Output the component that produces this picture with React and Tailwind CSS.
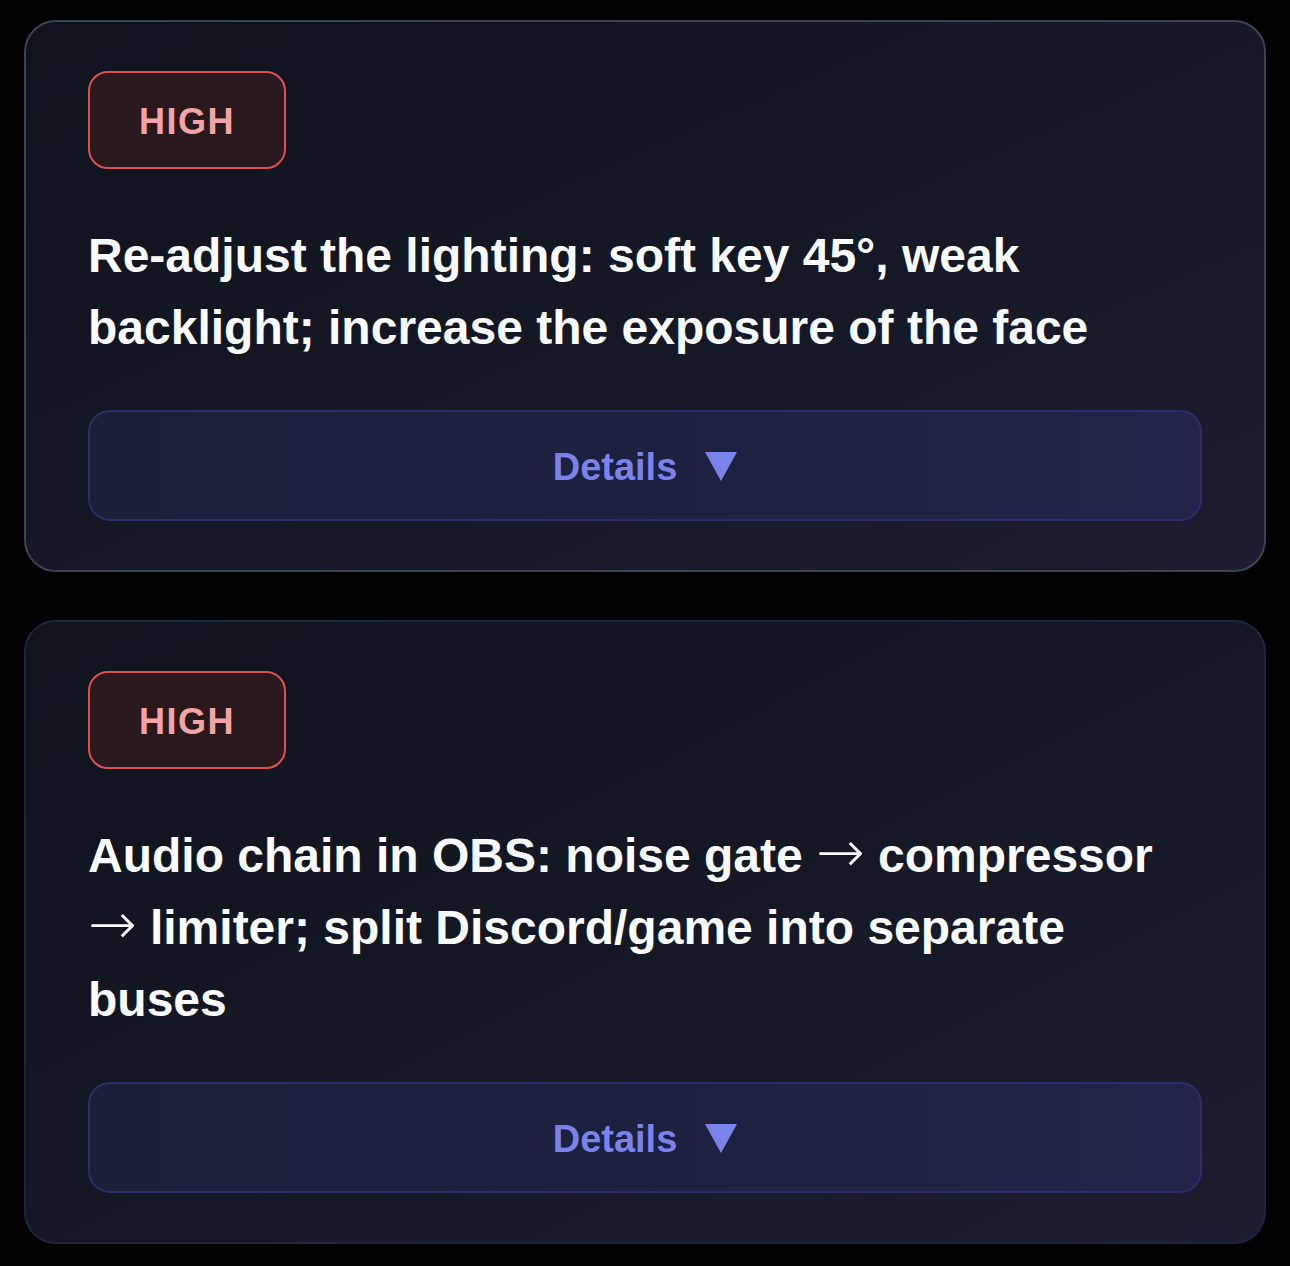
const items = [
  {
    id: 1,
    level: "HIGH",
    text: "Re-adjust the lighting: soft key 45°, weak backlight; increase the exposure of the face",
    border: "border-[#3d4353]",
  },
  {
    id: 2,
    level: "HIGH",
    text: "Audio chain in OBS: noise gate → compressor → limiter; split Discord/game into separate buses",
    border: "border-[#1f2440]",
  },
];

const Caret = () => (
  <svg width="32" height="29" viewBox="0 0 32 29" className="block">
    <path d="M0 0 H32 L16 29 Z" fill="#7b83eb" />
  </svg>
);

// arrows come out tiny in Liberation, so give them a thinner, wider face
const withArrows = (text) =>
  text.split("→").map((part, i) => (
    <span key={i}>
      {i > 0 && (
        <span
          className="font-extralight text-[58px] leading-none"
          style={{ fontFamily: '"DejaVu Sans", sans-serif' }}
        >
          →
        </span>
      )}
      {part}
    </span>
  ));

const TipCard = ({ level, text, border }) => {
  return (
    <div
      className={`rounded-[32px] border-2 ${border} bg-gradient-to-br from-[#0f131c] via-[#141824] to-[#1c1e31] px-[62px] py-[49px]`}
    >
      {/* Badge */}
      <div className="w-[198px] h-[98px] flex items-center justify-center pt-[4px] rounded-[20px] border-2 border-[#dc5052] bg-[#29191f]">
        <span className="text-[36px] font-bold tracking-[1.5px] text-[#f4a4a6] leading-none">
          {level}
        </span>
      </div>

      {/* Title */}
      <p className="mt-[51px] mb-[46px] text-[48px] leading-[72px] font-bold text-[#f8fafc]">
        {withArrows(text)}
      </p>

      {/* Details button */}
      <button className="w-full h-[111px] flex items-center justify-center gap-[28px] pt-[2px] rounded-[22px] border-2 border-[#2c2e68] bg-gradient-to-r from-[#1b1f38] via-[#1d2040] to-[#23244b]">
        <span className="text-[38px] font-bold text-[#7b83eb] leading-none">Details</span>
        <Caret />
      </button>
    </div>
  );
};

export default function App() {
  return (
    <div
      className="min-h-[1266px] bg-black px-[24px] pt-[20px] pb-[21px] flex flex-col gap-[48px]"
      style={{ fontFamily: '"Liberation Sans", Arial, sans-serif' }}
    >
      {items.map((item) => (
        <TipCard key={item.id} {...item} />
      ))}
    </div>
  );
}
